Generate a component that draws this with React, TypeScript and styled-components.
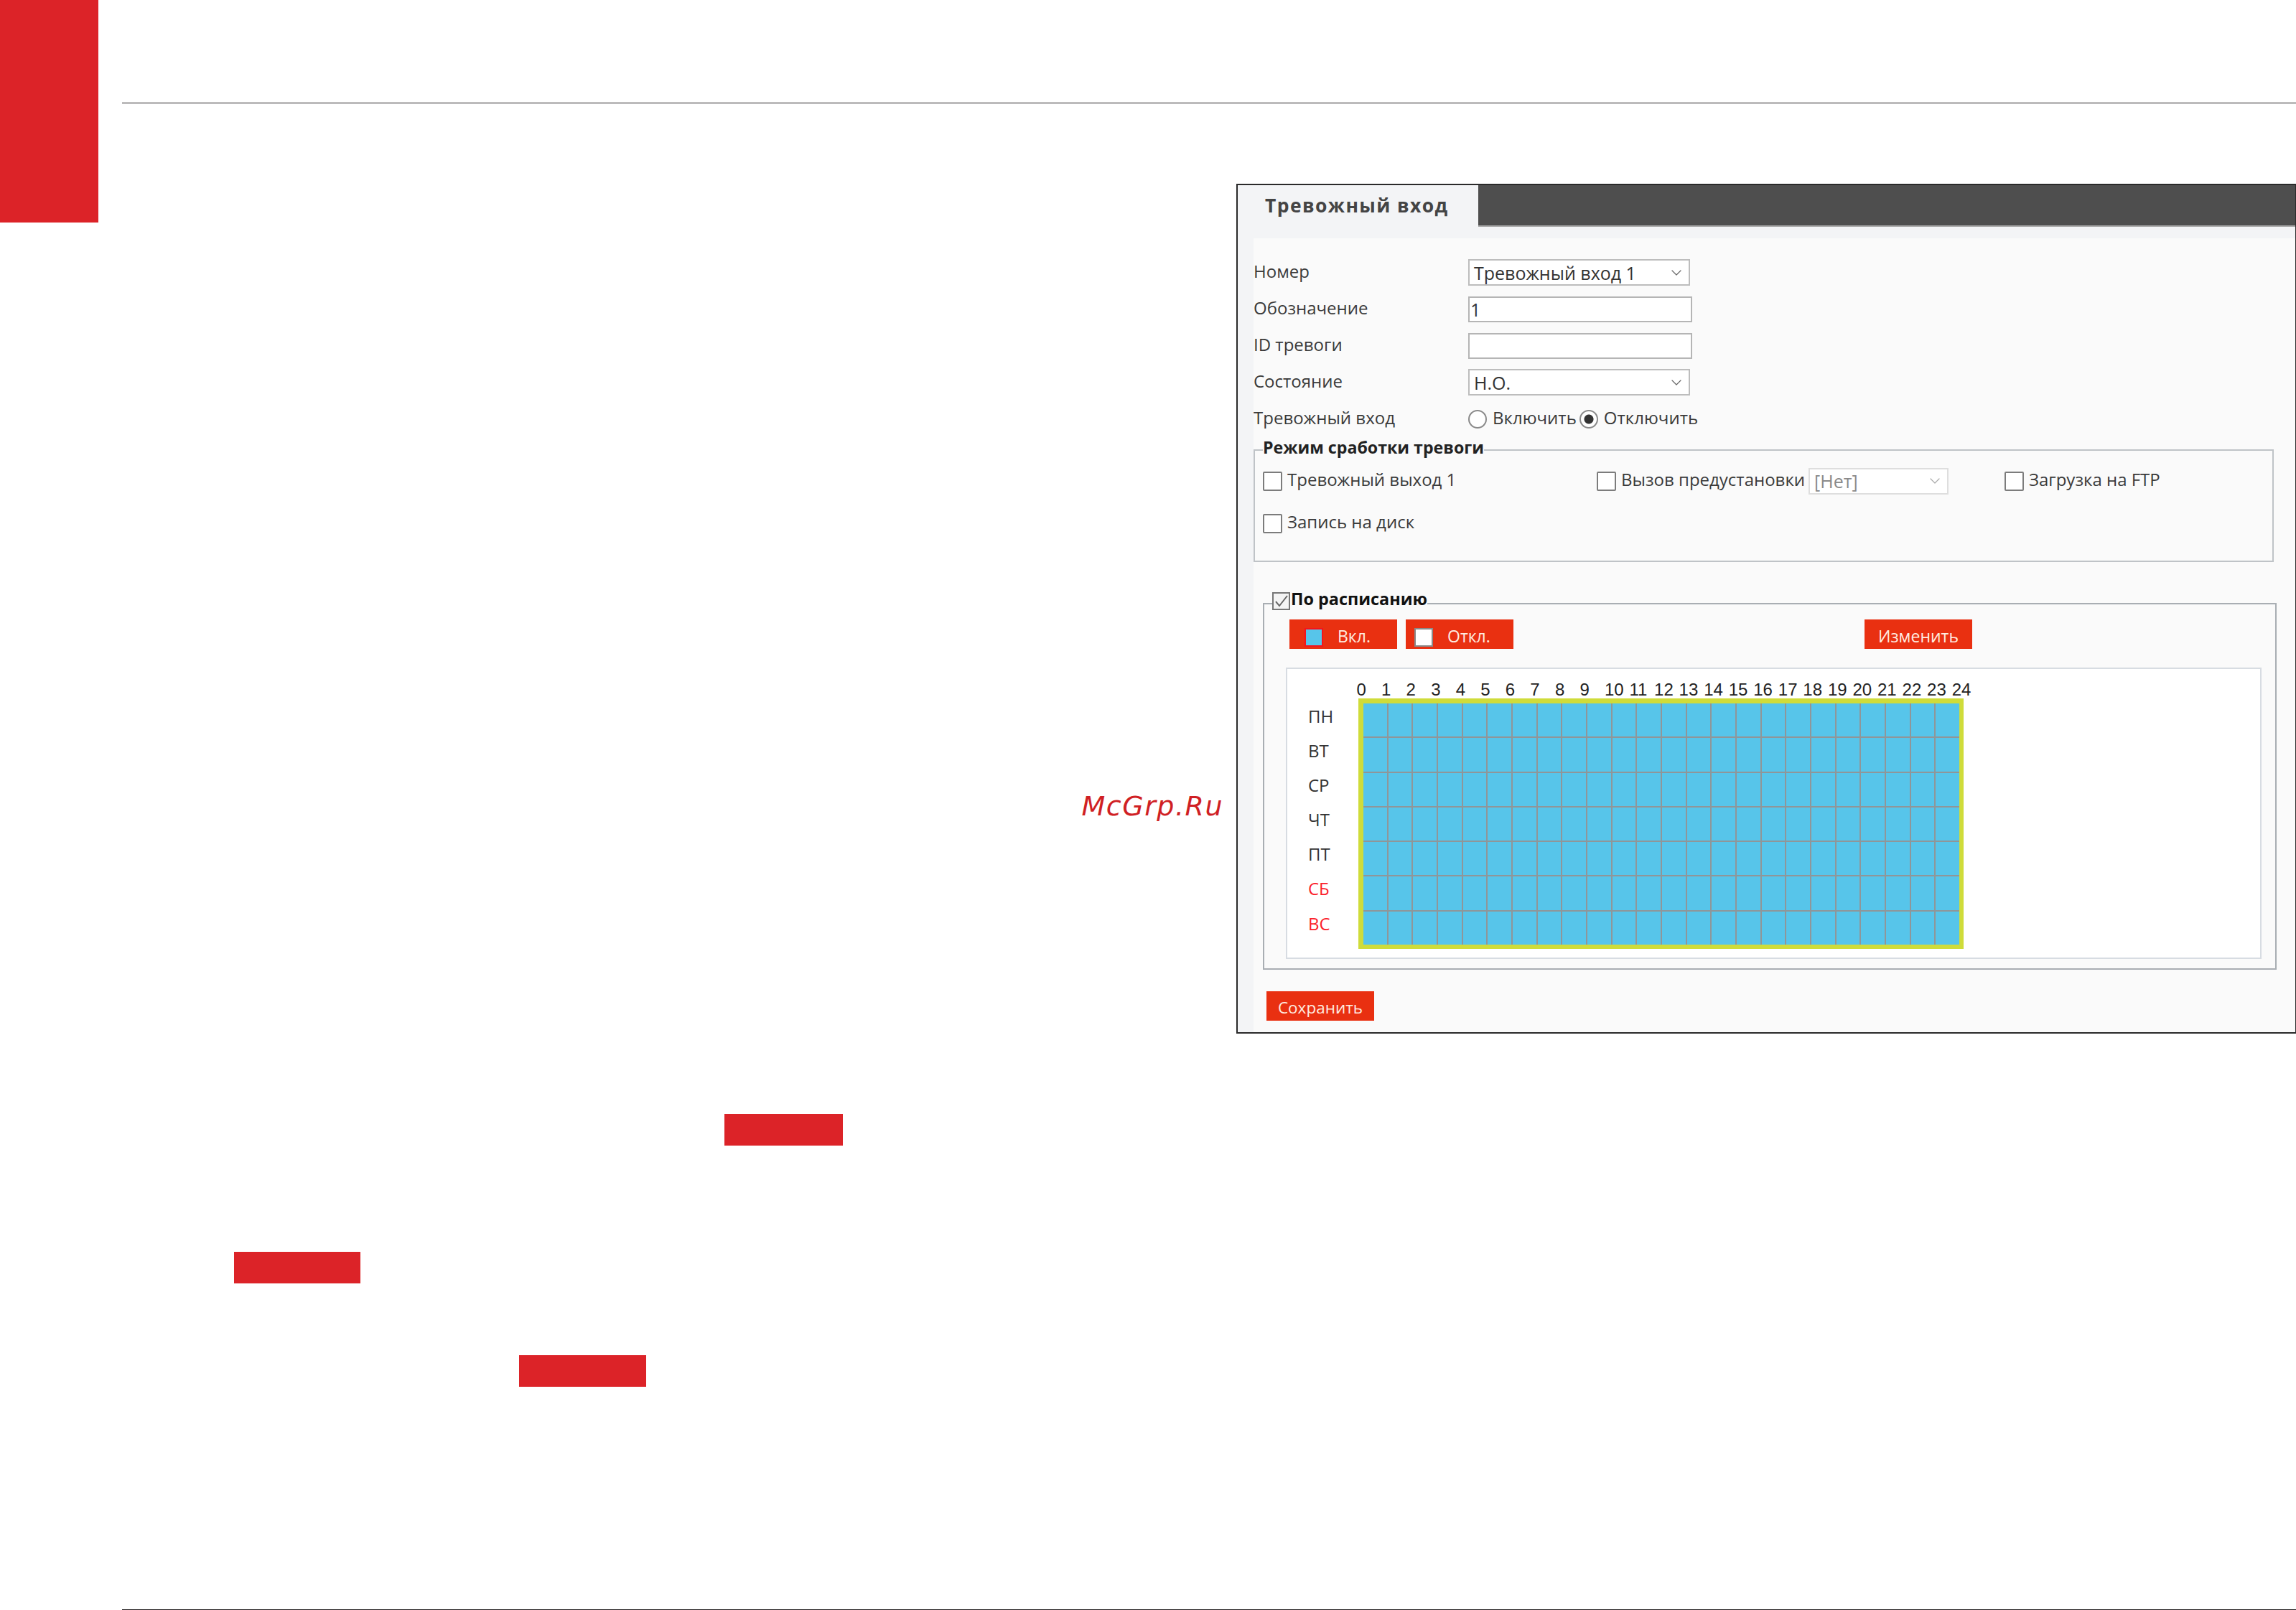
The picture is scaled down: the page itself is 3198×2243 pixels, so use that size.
import React from "react";
import styled, { createGlobalStyle } from "styled-components";
import { ChevronDown } from "lucide-react";

const GlobalStyle = createGlobalStyle`
  html, body {
    margin: 0;
    padding: 0;
    background: #fff;
  }
  * {
    box-sizing: border-box;
  }
`;

const HOURS = Array.from({ length: 25 }, (_, i) => i);
const DAYS = ["ПН", "ВТ", "СР", "ЧТ", "ПТ", "СБ", "ВС"];
const CELLS = Array.from({ length: 24 * 7 }, (_, i) => i);

const Page = styled.div`
  display: flex;
  width: 3198px;
  height: 2243px;
  overflow: hidden;
  background: #fff;
  font-family: "Open Sans", "Noto Sans", sans-serif;
`;

const RedTab = styled.div`
  flex: none;
  width: 137px;
  height: 310px;
  background: #dc2328;
`;

const Main = styled.div`
  flex: 1;
  margin-left: 33px;
  padding-top: 143px;
  display: flex;
  flex-direction: column;
`;

const Rule = styled.div`
  flex: none;
  height: 1px;
  background: #231f20;
`;

const BottomRule = styled(Rule)`
  margin-top: auto;
`;

const Figure = styled.div`
  flex: none;
  margin-top: 112px;
  display: flex;
  justify-content: flex-end;
  align-items: flex-start;
  gap: 18px;
`;

const Watermark = styled.div`
  margin-top: 844px;
  font-family: "DejaVu Sans", sans-serif;
  font-style: italic;
  font-size: 38px;
  line-height: 46px;
  letter-spacing: 1.5px;
  color: #d01f24;
  white-space: nowrap;
`;

const Panel = styled.div`
  flex: none;
  width: 1476px;
  height: 1184px;
  display: flex;
  flex-direction: column;
  background: #f3f4f6;
  border: 2px solid #2a2a2a;
  border-right-width: 1px;
`;

const TabBar = styled.div`
  flex: none;
  height: 58px;
  display: flex;
  background: #4e4e4e;
  border-bottom: 2px solid #a9a9a9;
`;

const Tab = styled.div`
  flex: none;
  width: 335px;
  height: 58px;
  padding-left: 38px;
  background: #f3f4f6;
  color: #444;
  font-size: 26.5px;
  font-weight: 700;
  line-height: 56px;
  letter-spacing: 1.4px;
`;

const Body = styled.div`
  flex: 1;
  margin-top: 16px;
  margin-left: 22px;
  padding-top: 22px;
  background: #fafafa;
  color: #3a3a3a;
  font-size: 24px;
`;

const Form = styled.div`
  display: grid;
  grid-template-columns: 299px 1fr;
  grid-auto-rows: 51px;
  align-items: center;
`;

const Label = styled.div`
  white-space: nowrap;
  margin-top: -5px;
`;

const SelectBox = styled.div<{ $disabled?: boolean; $width: number }>`
  display: flex;
  align-items: center;
  justify-content: space-between;
  width: ${(p) => p.$width}px;
  height: 37px;
  padding: 0 5px 0 6px;
  background: #fff;
  border: 2px solid ${(p) => (p.$disabled ? "#dedede" : "#bdbdbd")};
  color: ${(p) => (p.$disabled ? "#8a8a8a" : "#333")};
  font-size: 25px;
  white-space: nowrap;
`;

const TextField = styled.input`
  display: block;
  width: 312px;
  height: 36px;
  padding: 0 1px;
  background: #fff;
  border: 2px solid #b5b5b5;
  border-radius: 0;
  outline: none;
  color: #333;
  font: inherit;
  font-size: 25px;
`;

const RadioRow = styled.div`
  display: flex;
  align-items: center;
`;

const Radio = styled.span<{ $on?: boolean }>`
  flex: none;
  width: 26px;
  height: 26px;
  margin-right: 8px;
  border: 2px solid #8a8a8a;
  border-radius: 50%;
  background: ${(p) =>
    p.$on ? "radial-gradient(circle, #333 0 6px, #fff 7px)" : "#fff"};
`;

const RadioText = styled.span`
  margin-right: 4px;
  margin-top: -5px;
  white-space: nowrap;
`;

const Group = styled.fieldset`
  display: block;
  min-width: 0;
  margin: -2px 30px 0 0;
  padding: 0 0 0 11px;
  height: 176px;
  border: 2px solid #bfc3c7;
`;

const GroupTitle = styled.legend`
  margin-left: 0;
  padding: 0 0 8px;
  color: #222;
  font-size: 23.2px;
  font-weight: 700;
  line-height: 32px;
`;

const Options = styled.div`
  display: grid;
  grid-template-columns: 465px 568px 1fr;
  grid-auto-rows: 46px;
  row-gap: 13px;
  align-items: center;
`;

const Option = styled.div`
  display: flex;
  align-items: center;
  white-space: nowrap;
`;

const Box = styled.span`
  flex: none;
  display: block;
  width: 27px;
  height: 27px;
  margin-right: 7px;
  background: #fff;
  border: 2px solid #7c7c7c;
  border-radius: 2px;
`;

const OptionText = styled.span`
  margin-top: -5px;
`;

const PresetGap = styled.span`
  width: 5px;
`;

const Schedule = styled.fieldset`
  display: block;
  min-width: 0;
  height: 532px;
  margin: 36px 26px 0 13px;
  padding: 0;
  border: 2px solid #a9aeb3;
`;

const ScheduleTitle = styled.legend`
  display: flex;
  align-items: flex-start;
  height: 44px;
  margin-left: 11px;
  padding: 0;
  color: #111;
  font-size: 23.4px;
  font-weight: 700;
  line-height: 30px;
`;

const TickBox = styled.span`
  flex: none;
  display: flex;
  align-items: center;
  justify-content: center;
  width: 25px;
  height: 25px;
  margin: 6px 1px 0 0;
  background: #f4f4f4;
  border: 2px solid #777;
`;

const Toolbar = styled.div`
  display: flex;
  padding-left: 35px;
`;

const RedButton = styled.button`
  flex: none;
  display: flex;
  align-items: center;
  justify-content: center;
  width: 150px;
  height: 41px;
  padding: 4px 0 0;
  background: #e93011;
  border: 0;
  color: #ffece0;
  font: inherit;
  font-size: 23px;
`;

const ModeButton = styled(RedButton)<{ $inset: number }>`
  justify-content: flex-start;
  margin-right: 12px;
  padding-left: ${(p) => p.$inset}px;
  padding-top: 4px;
`;

const ChangeButton = styled(RedButton)`
  margin-left: 477px;
`;

const Swatch = styled.span<{ $on?: boolean }>`
  flex: none;
  width: 26px;
  height: 26px;
  margin: 5px 20px 0 0;
  background: ${(p) => (p.$on ? "#57c5ea" : "#fff")};
  border: 2px solid ${(p) => (p.$on ? "#f4141c" : "#8a8a8a")};
`;

const Chart = styled.div`
  height: 406px;
  margin: 26px 19px 0 30px;
  display: grid;
  grid-template-columns: 99px 843px;
  grid-template-rows: 41px 349px;
  background: #fff;
  border: 2px solid #d7dce2;
  color: #2b2b2b;
`;

const HourRow = styled.div`
  grid-column: 2;
  margin-left: -2.5px;
  display: grid;
  grid-template-columns: repeat(25, 34.56px);
  align-items: end;
  font-family: "Liberation Sans", Arial, sans-serif;
  font-size: 24px;
  line-height: 24px;
  color: #222;
`;

const DayColumn = styled.div`
  grid-column: 1;
  padding: 0 0 0 29px;
  display: grid;
  grid-auto-rows: 48.17px;
  align-items: center;
  font-size: 24px;
`;

const Day = styled.div<{ $weekend?: boolean }>`
  color: ${(p) => (p.$weekend ? "#fb1f2c" : "#333")};
`;

const Frame = styled.div`
  border: 7px solid #cfdc3a;
  border-width: 7px 6px 6px 7px;
  background: #8f9699;
  display: grid;
  grid-template-columns: repeat(24, 1fr);
  grid-template-rows: repeat(7, 1fr);
  gap: 2px;
`;

const Cell = styled.div`
  background: #57c5ea;
`;

const SaveButton = styled(RedButton)`
  margin: 30px 0 0 18px;
  font-size: 22.5px;
`;

const Highlight = styled.div<{ $left: number; $top: number; $width: number }>`
  flex: none;
  width: ${(p) => p.$width}px;
  height: 44px;
  margin-top: ${(p) => p.$top}px;
  margin-left: ${(p) => p.$left}px;
  background: #dc2328;
`;

export default function App() {
  return (
    <>
      <GlobalStyle />
      <Page>
        <RedTab />
        <Main>
          <Rule />
          <Figure>
            <Watermark>McGrp.Ru</Watermark>
            <Panel>
              <TabBar>
                <Tab>Тревожный вход</Tab>
              </TabBar>
              <Body>
                <Form>
                  <Label>Номер</Label>
                  <SelectBox $width={309}>
                    Тревожный вход 1
                    <ChevronDown size={24} color="#666" strokeWidth={1.2} />
                  </SelectBox>
                  <Label>Обозначение</Label>
                  <TextField defaultValue="1" />
                  <Label>ID тревоги</Label>
                  <TextField />
                  <Label>Состояние</Label>
                  <SelectBox $width={309}>
                    Н.О.
                    <ChevronDown size={24} color="#666" strokeWidth={1.2} />
                  </SelectBox>
                  <Label>Тревожный вход</Label>
                  <RadioRow>
                    <Radio />
                    <RadioText>Включить</RadioText>
                    <Radio $on />
                    <RadioText>Отключить</RadioText>
                  </RadioRow>
                </Form>

                <Group>
                  <GroupTitle>Режим сработки тревоги</GroupTitle>
                  <Options>
                    <Option>
                      <Box />
                      <OptionText>Тревожный выход 1</OptionText>
                    </Option>
                    <Option>
                      <Box />
                      <OptionText>Вызов предустановки</OptionText>
                      <PresetGap />
                      <SelectBox $disabled $width={195}>
                        [Нет]
                        <ChevronDown size={24} color="#aaa" strokeWidth={1.2} />
                      </SelectBox>
                    </Option>
                    <Option>
                      <Box />
                      <OptionText>Загрузка на FTP</OptionText>
                    </Option>
                    <Option>
                      <Box />
                      <OptionText>Запись на диск</OptionText>
                    </Option>
                  </Options>
                </Group>

                <Schedule>
                  <ScheduleTitle>
                    <TickBox>
                      <svg width="21" height="21" viewBox="0 0 21 21" fill="none">
                        <path d="M3 11l5 6L19 3" stroke="#666" strokeWidth="2" />
                      </svg>
                    </TickBox>
                    По расписанию
                  </ScheduleTitle>
                  <Toolbar>
                    <ModeButton $inset={21}>
                      <Swatch $on />
                      Вкл.
                    </ModeButton>
                    <ModeButton $inset={12}>
                      <Swatch />
                      Откл.
                    </ModeButton>
                    <ChangeButton>Изменить</ChangeButton>
                  </Toolbar>
                  <Chart>
                    <HourRow>
                      {HOURS.map((h) => (
                        <span key={h}>{h}</span>
                      ))}
                    </HourRow>
                    <DayColumn>
                      {DAYS.map((d, i) => (
                        <Day key={d} $weekend={i > 4}>
                          {d}
                        </Day>
                      ))}
                    </DayColumn>
                    <Frame>
                      {CELLS.map((c) => (
                        <Cell key={c} />
                      ))}
                    </Frame>
                  </Chart>
                </Schedule>

                <SaveButton>Сохранить</SaveButton>
              </Body>
            </Panel>
          </Figure>
          <Highlight $left={839} $top={112} $width={165} />
          <Highlight $left={156} $top={148} $width={176} />
          <Highlight $left={553} $top={100} $width={177} />
          <BottomRule />
        </Main>
      </Page>
    </>
  );
}
